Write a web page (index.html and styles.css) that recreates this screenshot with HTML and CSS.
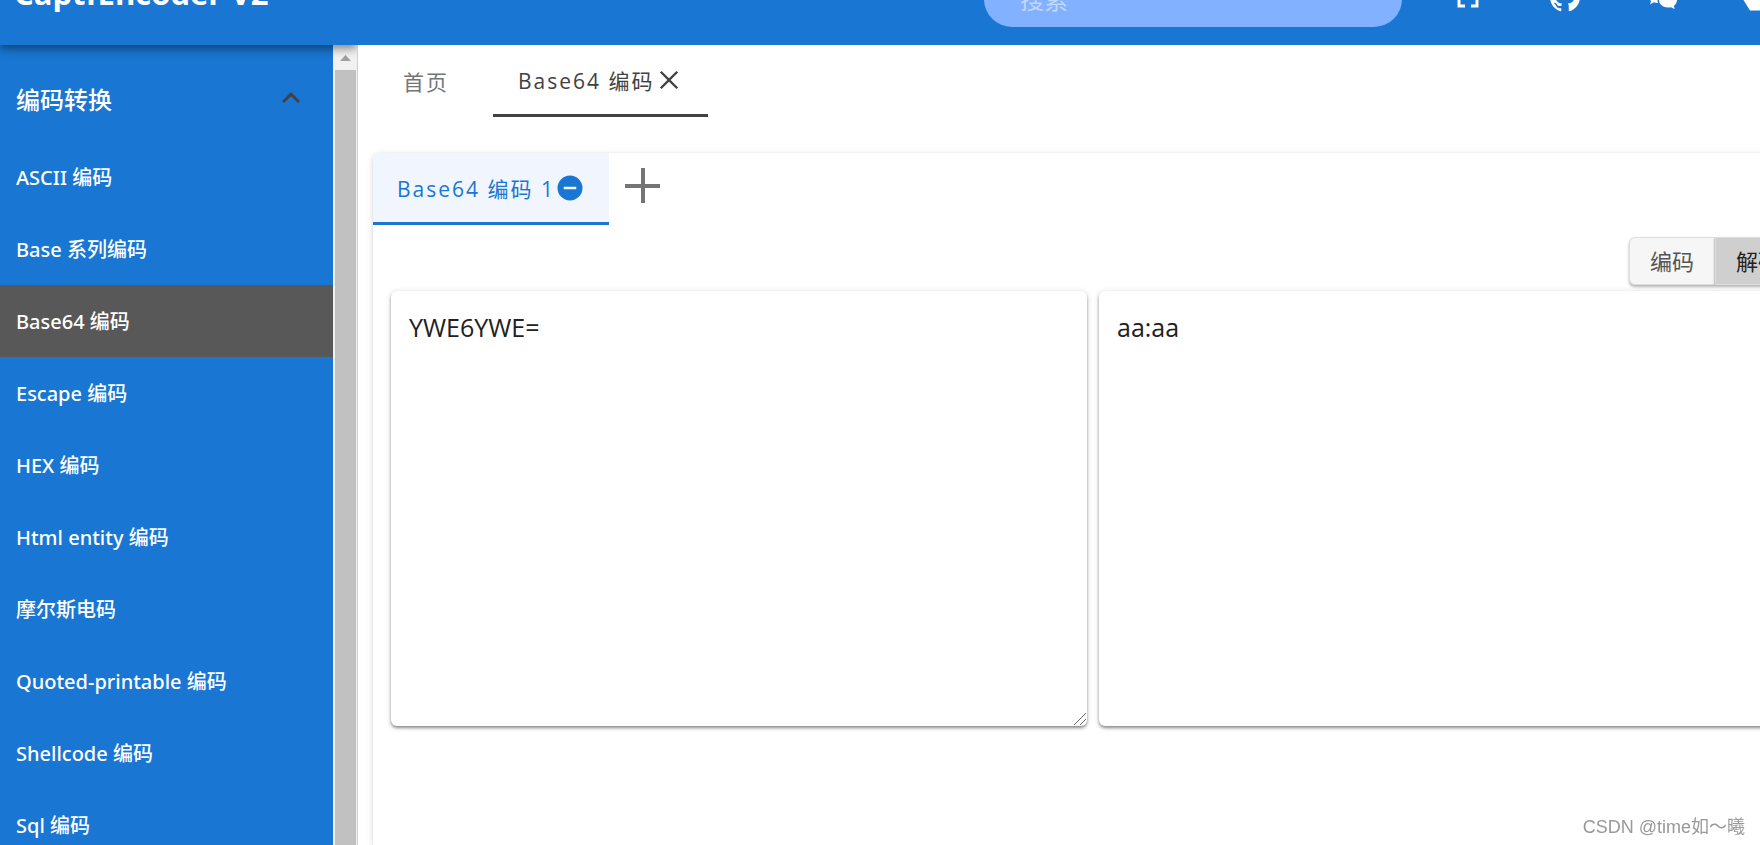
FILE: index.html
```html
<!DOCTYPE html>
<html lang="zh-CN">
<head>
<meta charset="utf-8">
<title>CaptfEncoder V2</title>
<link rel="stylesheet" href="styles.css">
</head>
<body>
<header class="app-bar">
  <h1 class="brand">CaptfEncoder V2</h1>
  <input class="search" type="search" placeholder="搜索" aria-label="搜索">
  <div class="actions">
    <button class="icon-btn" aria-label="全屏"><svg viewBox="0 0 24 24" width="36" height="36"><path d="M5 5h5v2H7v3H5V5m9 0h5v5h-2V7h-3V5m3 9h2v5h-5v-2h3v-3m-7 3v2H5v-5h2v3h3z"/></svg></button>
    <button class="icon-btn" aria-label="GitHub"><svg viewBox="0 0 24 24" width="36" height="36"><path d="M12 2A10 10 0 0 0 2 12c0 4.420 2.870 8.170 6.840 9.500.5.080.660-.230.660-.500v-1.690c-2.770.600-3.360-1.340-3.360-1.340-.460-1.160-1.110-1.470-1.110-1.470-.910-.620.070-.600.070-.600 1 .070 1.530 1.030 1.530 1.030.870 1.520 2.340 1.070 2.910.830.090-.650.350-1.090.630-1.340-2.220-.250-4.550-1.110-4.550-4.920 0-1.110.380-2 1.030-2.710-.100-.250-.450-1.290.100-2.640 0 0 .840-.270 2.750 1.020.790-.220 1.650-.330 2.500-.330s1.710.110 2.500.330c1.910-1.290 2.750-1.020 2.750-1.020.550 1.350.200 2.390.100 2.640.650.710 1.030 1.600 1.030 2.710 0 3.820-2.340 4.660-4.570 4.910.360.310.690.920.690 1.850V21c0 .270.160.590.670.500C19.140 20.160 22 16.420 22 12A10 10 0 0 0 12 2z"/></svg></button>
    <button class="icon-btn" aria-label="微信"><svg viewBox="0 0 24 24" width="36" height="36"><path d="M9.500 4C5.360 4 2 6.690 2 10c0 1.890 1.080 3.560 2.780 4.660L4 17l2.500-1.500c.890.310 1.870.5 2.910.5A5.200 5.200 0 0 1 9 14c0-3.310 3.130-6 7-6 .190 0 .380 0 .560.030C15.540 5.690 12.780 4 9.500 4m-3 2.500a1 1 0 1 1 0 2 1 1 0 0 1 0-2m5 0a1 1 0 1 1 0 2 1 1 0 0 1 0-2M16 9c-3.310 0-6 2.240-6 5s2.690 5 6 5c.670 0 1.310-.080 1.910-.250L20.500 20l-.620-2.060C21.170 17.040 22 15.600 22 14c0-2.760-2.690-5-6-5m-2 2.500a1 1 0 1 1 0 2 1 1 0 0 1 0-2m4 0a1 1 0 1 1 0 2 1 1 0 0 1 0-2z"/></svg></button>
    <button class="icon-btn" aria-label="云盘"><svg viewBox="0 0 24 24" width="36" height="36"><path d="M6 3h12l5 11-4 7H6L1 13z"/></svg></button>
  </div>
</header>

<div class="body-row">
  <nav class="sidebar" aria-label="编码转换">
    <div class="menu">
      <button class="group" aria-expanded="true">编码转换
        <svg viewBox="0 0 24 24" width="36" height="36"><path d="M7.400 15.400L12 10.800l4.600 4.600L18 14l-6-6-6 6z"/></svg>
      </button>
      <a class="item" href="#ascii">ASCII 编码</a>
      <a class="item" href="#base">Base 系列编码</a>
      <a class="item current" href="#base64" aria-current="page">Base64 编码</a>
      <a class="item" href="#escape">Escape 编码</a>
      <a class="item" href="#hex">HEX 编码</a>
      <a class="item" href="#html">Html entity 编码</a>
      <a class="item" href="#morse">摩尔斯电码</a>
      <a class="item" href="#qp">Quoted-printable 编码</a>
      <a class="item" href="#shellcode">Shellcode 编码</a>
      <a class="item" href="#sql">Sql 编码</a>
    </div>
    <div class="scrollbar" aria-hidden="true">
      <svg class="scroll-up" viewBox="0 0 24 25" width="24" height="25"><path d="M7 16h11l-5.500-6z"/></svg>
      <div class="thumb"></div>
    </div>
  </nav>

  <main class="main">
    <div class="tabs" role="tablist">
      <button class="tab" role="tab">首页</button>
      <button class="tab open" role="tab" aria-selected="true">Base64 编码<svg viewBox="0 0 24 24" width="28" height="28"><path d="M4.200 5.600L5.600 4.200 12 10.600l6.400-6.400 1.400 1.400L13.400 12l6.400 6.400-1.400 1.400L12 13.400l-6.400 6.400-1.400-1.400L10.600 12z"/></svg></button>
    </div>

    <section class="panel">
      <div class="subtabs" role="tablist">
        <button class="subtab" role="tab" aria-selected="true">Base64 编码 1<svg viewBox="0 0 24 24" width="30" height="30"><path d="M17 13H7v-2h10m-5-9a10 10 0 1 0 0 20 10 10 0 0 0 0-20z"/></svg></button>
        <button class="add" aria-label="新增"><svg viewBox="0 0 36 36" width="36" height="36"><path d="M16 0h4v16h15v4H20v15h-4V20H0v-4h16z"/></svg></button>
      </div>
      <div class="modes">
        <button class="mode">编码</button>
        <button class="mode chosen" aria-pressed="true">解码</button>
      </div>
      <div class="editors">
        <div class="editor-box">
          <textarea class="editor" aria-label="输入" spellcheck="false">YWE6YWE=</textarea>
          <svg class="grip" viewBox="0 0 12 12" width="12" height="12"><path d="M0 12L12 0M6 12l6-6"/></svg>
        </div>
        <div class="editor-box">
          <textarea class="editor" aria-label="输出" spellcheck="false">aa:aa</textarea>
          <svg class="grip" viewBox="0 0 12 12" width="12" height="12"><path d="M0 12L12 0M6 12l6-6"/></svg>
        </div>
      </div>
    </section>
  </main>
</div>
<div class="watermark">CSDN @time如～曦</div>
</body>
</html>
```
FILE: styles.css
```css
* { box-sizing: border-box; }

body {
  margin: 0;
  height: 100vh;
  overflow: hidden;
  display: flex;
  flex-direction: column;
  background: #fff;
  font-family: "Open Sans", "Noto Sans CJK SC", sans-serif;
}

button {
  border: 0;
  padding: 0;
  background: none;
  font-family: inherit;
  color: inherit;
}

svg { fill: currentColor; flex: none; }

.app-bar {
  flex: none;
  height: 92px;
  margin-top: -47px;
  display: flex;
  align-items: center;
  background: #1976d2;
  color: #fff;
}

.brand {
  flex: 1;
  margin: 0;
  padding: 0 0 12px 14px;
  font-size: 31px;
  font-weight: 700;
  line-height: 40px;
}

.search {
  width: 418px;
  height: 56px;
  border: 0;
  border-radius: 28px;
  padding: 0 36px;
  background: #82b1ff;
  color: #fff;
  font: inherit;
  font-size: 24px;
}

.search::placeholder { color: #c0d8ff; }

.actions {
  display: flex;
  gap: 60px;
  margin: 0 -18px 0 48px;
  padding-bottom: 4px;
}

.icon-btn { display: flex; width: 37px; }

.body-row {
  flex: 1;
  min-height: 0;
  display: flex;
}

.sidebar {
  flex: none;
  width: 358px;
  display: flex;
  border-right: 1px solid #d0d0d0;
  position: relative;
  overflow: hidden;
}

.sidebar::before {
  content: "";
  position: absolute;
  inset: -10px 0 auto;
  height: 10px;
  box-shadow: 0 2px 8px rgba(0, 0, 0, .4), 0 4px 12px rgba(0, 0, 0, .2);
}

.menu {
  flex: 1;
  background: #1976d2;
  color: #fff;
}

.group {
  width: 100%;
  height: 96px;
  padding: 10px 24px 0 16px;
  display: flex;
  align-items: center;
  justify-content: space-between;
  font-size: 24px;
  font-weight: 500;
}

.group svg { color: #424242; }

.item {
  display: flex;
  align-items: center;
  height: 72px;
  padding: 0 0 2px 16px;
  color: #fff;
  font-family: "Noto Sans", "Noto Sans CJK SC", sans-serif;
  font-size: 20px;
  font-weight: 500;
  text-decoration: none;
}

.current { background: #585858; }

.scrollbar {
  width: 24px;
  display: flex;
  flex-direction: column;
  background: #f1f1f1;
}

.scroll-up { color: #a0a0a0; }

.thumb {
  flex: 1;
  margin: 0 1px 0 2px;
  background: #c1c1c1;
}

.main {
  flex: 1;
  min-width: 0;
  margin-right: -53px;
  padding-left: 15px;
  display: flex;
  flex-direction: column;
}

.tabs {
  display: flex;
  height: 72px;
  margin-bottom: 36px;
}

.tab,
.subtab {
  display: flex;
  align-items: center;
  font-size: 21px;
  letter-spacing: 2px;
}

.tab {
  padding: 0 44px 0 30px;
  color: #757575;
}

.open {
  padding: 0 25px;
  color: #424242;
  border-bottom: 3px solid #424242;
}

.panel {
  flex: 1;
  border-radius: 6px 0 0 0;
  box-shadow: 0 1px 4px rgba(0, 0, 0, .12), 0 2px 10px rgba(0, 0, 0, .08);
}

.subtabs { display: flex; height: 72px; }

.subtab {
  padding: 0 24px;
  border-bottom: 3px solid #1976d2;
  border-radius: 6px 0 0 0;
  background: #f1f6fe;
  color: #1976d2;
}

.add {
  display: flex;
  margin: 15px 0 0 16px;
  color: #757575;
}

.modes {
  display: flex;
  justify-content: flex-end;
  padding: 12px 12px 6px;
}

.mode {
  height: 48px;
  padding: 0 20px 2px;
  border: 1px solid #ddd;
  border-radius: 6px 0 0 6px;
  background: #f6f6f6;
  color: #555;
  font-size: 22px;
  box-shadow: 0 2px 3px rgba(0, 0, 0, .3);
}

.chosen {
  border-radius: 0 6px 6px 0;
  background: #cfcfcf;
  color: #222;
}

.editors {
  display: flex;
  gap: 12px;
  padding: 0 18px;
}

.editor-box {
  flex: 1;
  min-width: 0;
  position: relative;
}

.editor {
  display: block;
  width: 100%;
  height: 435px;
  padding: 18px;
  border: 0;
  border-radius: 6px;
  background: #fff;
  color: #212121;
  font: inherit;
  font-size: 25px;
  line-height: 36px;
  box-shadow: 0 2px 3px rgba(0, 0, 0, .4), 0 1px 7px rgba(0, 0, 0, .12);
  resize: vertical;
}

.editor::-webkit-resizer { display: none; }

.grip {
  position: absolute;
  right: 1px;
  bottom: 1px;
  stroke: #666;
  pointer-events: none;
}

.watermark {
  position: fixed;
  right: 15px;
  bottom: 4px;
  color: #999;
  font: 18px/28px "Liberation Sans", "Noto Sans CJK SC", sans-serif;
}
```
